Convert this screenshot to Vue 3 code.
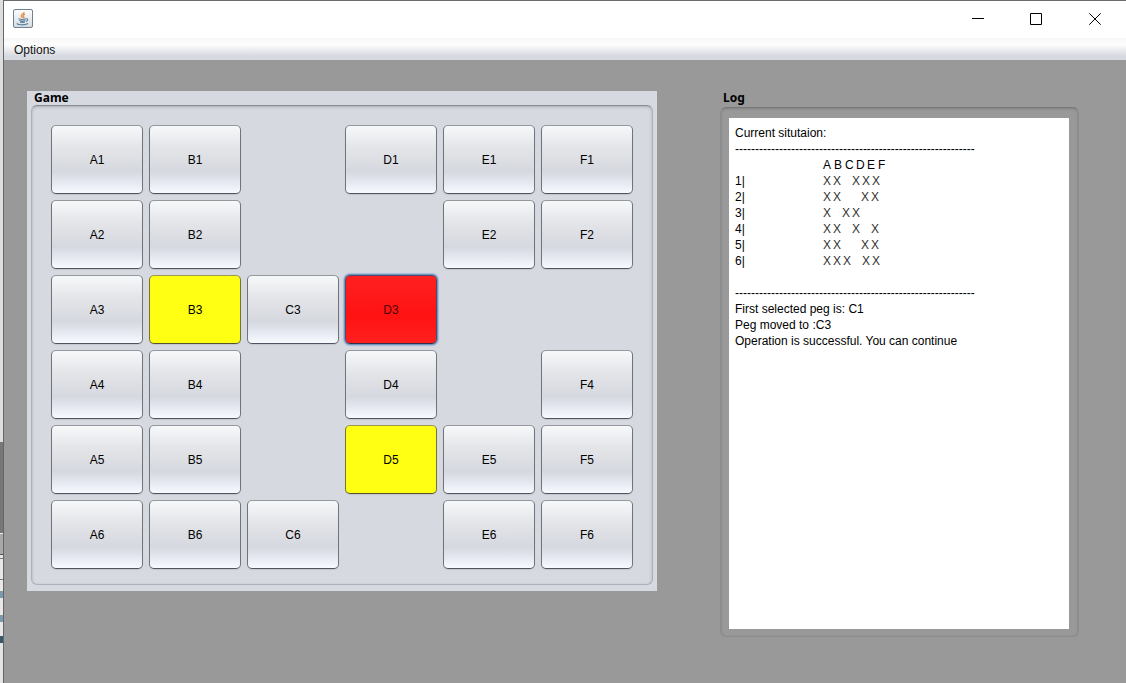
<script setup>
import { ref } from 'vue'

const columns = ['A', 'B', 'C', 'D', 'E', 'F']
const layout = ['XX.XXX', 'XX..XX', 'XXXX..', 'XX.X.X', 'XX.XXX', 'XXX.XX']
const targets = ['B3', 'D5']
const selected = ref('D3')

const cells = layout.flatMap((row, r) =>
  [...row].map((mark, c) => ({ id: columns[c] + (r + 1), filled: mark === 'X' }))
)

const situation = ['XX.XXX', 'XX..XX', 'X.XX', 'XX.X.X', 'XX..XX', 'XXX.XX']
const rule = '-'.repeat(60)
</script>

<template>
  <div class="desktop">
    <div class="behind"></div>
    <div class="window">
      <header class="titlebar">
        <svg class="java" viewBox="0 0 20 20" aria-hidden="true">
          <defs>
            <linearGradient id="tile" x1="0" y1="0" x2="0" y2="1">
              <stop offset="0" stop-color="#fdfdfd" />
              <stop offset="1" stop-color="#d3dce3" />
            </linearGradient>
          </defs>
          <rect x=".5" y=".5" width="19" height="18" rx="1.5" fill="url(#tile)" stroke="#71818f" />
          <path d="M11 3c.6 1.800-3.400 2.300-2.700 4.200.3.800 1 1.100 1.200 1.800M12 5.200c-2 .8-2.200 1.800-1.300 2.600.5.500.2 1-.2 1.400" fill="none" stroke="#e58a3a" stroke-width="1.3" />
          <path d="M5.500 9.800c2 .8 5.500.8 7.500 0M6.300 11.500c1.800.7 4.400.7 6 0M7 13c1.500.5 3.500.5 5 0M13.200 9.800c2.200-.4 2.200 2-.3 2.600M4.500 14.200c-2 1.900 7.500 2.300 10.500.3" fill="none" stroke="#587d9b" stroke-width="1.100" />
        </svg>
        <div class="controls">
          <button type="button" aria-label="Minimize">
            <svg viewBox="0 0 12 12"><path d="M0 5.500h12" /></svg>
          </button>
          <button type="button" aria-label="Maximize">
            <svg viewBox="0 0 12 12"><path d="M.5.5h11v11H.5z" /></svg>
          </button>
          <button type="button" aria-label="Close">
            <svg viewBox="0 0 12 12"><path d="M.3.3l11.400 11.400M11.700.3L.3 11.700" /></svg>
          </button>
        </div>
      </header>
      <nav class="menubar"><button type="button">Options</button></nav>
      <main class="content">
        <section class="game">
          <h2>Game</h2>
          <div class="board">
            <template v-for="cell in cells" :key="cell.id">
              <button
                v-if="cell.filled"
                type="button"
                class="peg"
                :class="{ target: targets.includes(cell.id), selected: selected === cell.id }"
                @click="selected = cell.id"
              >{{ cell.id }}</button>
              <span v-else></span>
            </template>
          </div>
        </section>
        <section class="log">
          <h2>Log</h2>
          <div class="frame">
            <div class="output" role="log">
              <p>Current situtaion:</p>
              <p class="rule">{{ rule }}</p>
              <div class="line">
                <span class="label"></span>
                <span v-for="name in columns" :key="name" class="head">{{ name }}</span>
              </div>
              <div v-for="(row, r) in situation" :key="r" class="line">
                <span class="label">{{ r + 1 }}|</span>
                <span v-for="(mark, c) in row" :key="c" :class="mark === 'X' ? 'mark' : 'hole'">{{ mark === 'X' ? 'X' : '' }}</span>
              </div>
              <p></p>
              <p class="rule">{{ rule }}</p>
              <p>First selected peg is: C1</p>
              <p>Peg moved to :C3</p>
              <p>Operation is successful. You can continue</p>
            </div>
          </div>
        </section>
      </main>
    </div>
  </div>
</template>

<style>
body { margin: 0; }
</style>

<style scoped>
* { box-sizing: border-box; }
.desktop {
  display: flex;
  min-height: 100vh;
  font: 12px/16px "Liberation Sans", Arial, sans-serif;
  color: #000;
}
.behind {
  width: 3px;
  flex: none;
  background: linear-gradient(#dedede 442px, #777 442px 533px, #eee 533px 534px, #a8a8a8 534px 554px, #555 554px 555px, #e4e4e4 555px 558px, #777 558px 559px, #e8e8e8 559px 579px, #777 579px 580px, #e8e8e8 580px 591px, #7c9aab 591px 598px, #e8e8e8 598px 615px, #7c9aab 615px 622px, #e8e8e8 622px 636px, #36576c 636px 643px, #e4e4e4 643px);
}
.window {
  flex: 1;
  min-width: 0;
  display: flex;
  flex-direction: column;
  border-top: 1px solid #6b6b6b;
  border-left: 1px solid #666;
  background: #999;
}
.titlebar {
  display: flex;
  justify-content: space-between;
  align-items: center;
  height: 37px;
  padding: 0 1px 2px 9px;
  background: #fff;
}
.java { width: 20px; height: 20px; }
.controls { display: flex; }
.controls button {
  width: 58px;
  height: 34px;
  padding: 0;
  border: 0;
  background: none;
  display: grid;
  place-items: center;
}
.controls button:last-child { width: 60px; }
.controls svg { width: 12px; height: 12px; fill: none; stroke: #000; stroke-width: 1; }
.menubar {
  height: 22px;
  background: linear-gradient(#f6f6f6, #fdfdfd 30%, #d6d9e0 82%, #d6d9e0);
}
.menubar button {
  padding: 4px 10px 2px;
  border: 0;
  background: none;
  font: inherit;
  color: #111;
}
.content {
  flex: 1;
  display: grid;
  grid-template-columns: minmax(0, 630fr) minmax(0, 359fr);
  align-items: start;
  gap: 63px;
  padding: 31px 47px 46px 23px;
}
h2 {
  margin: 0;
  font: bold 12px/14px "Noto Sans", "Open Sans", sans-serif;
}
.game {
  padding: 0 4px 6px;
  background: #d6d9e0;
}
.game h2, .log h2 { padding-left: 3px; }
.board {
  display: grid;
  grid-template-columns: repeat(6, 1fr);
  grid-auto-rows: 69px;
  gap: 6px;
  padding: 19px 19px 15px;
  border: 1px solid #adb0b6;
  border-top-color: #888c91;
  border-radius: 6px;
  box-shadow: inset 0 1px 3px #a9acb2;
}
.peg {
  padding: 0;
  border: 1px solid #777b82;
  border-color: #95989d #70747b #50545e;
  border-radius: 5px;
  background: linear-gradient(#f7f8fa, #e5e6e9 30%, #d5d8df 68%, #e6e9f1 85%, #f8faff);
  box-shadow: 0 1px 1px #c3c6cd;
  font: inherit;
  color: #000;
}
.target {
  background: #ffff14;
  border-color: #9b9a50 #77762f #56552c;
}
.selected {
  background: linear-gradient(#ff2020, #ff1212 60%, #ff2020);
  border-color: #51496b #51496b #30304c;
  box-shadow: 0 0 0 1px #7396bf, 0 0 1px 2px #a5bbd5;
  color: #4d0505;
}
.frame {
  padding: 10px 9px 7px 8px;
  margin-top: 2px;
  border: 1px solid #8b8b8b;
  border-top-color: #777;
  border-radius: 6px;
  box-shadow: inset 0 1px 3px #808080;
}
.output {
  min-height: 511px;
  padding: 7px 6px;
  background: #fff;
}
p { margin: 0; min-height: 16px; }
.rule { white-space: nowrap; overflow: hidden; }
.line { display: flex; height: 16px; }
.label { width: 88px; }
.head { width: 11px; }
.mark { width: 10px; color: #333; }
.hole { width: 9px; }
</style>
